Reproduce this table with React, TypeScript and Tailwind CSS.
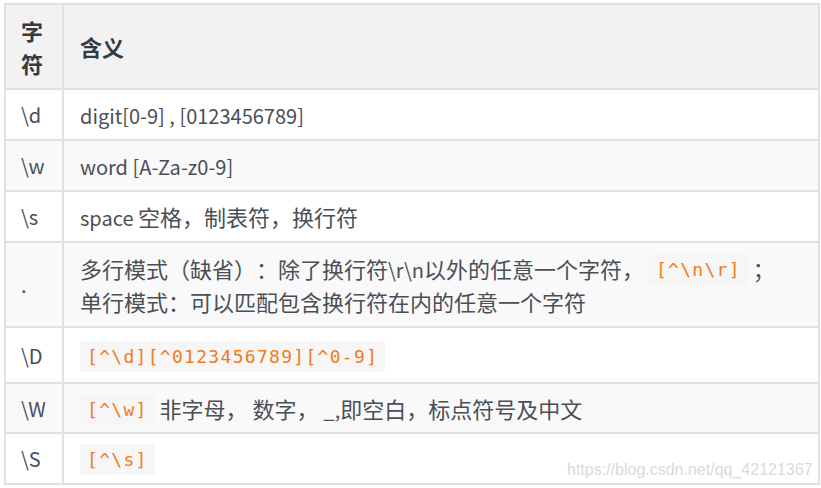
import React from 'react';

const Code = ({ children }: { children: React.ReactNode }) => (
  <code className="inline-block rounded-[3px] bg-[#f6f6f6] px-[7px] align-[2px] font-['DejaVu_Sans_Mono',monospace] text-[18px] leading-[31px] tracking-[1.3px] text-[#f47a17]">
    {children}
  </code>
);

// Latin runs sit a touch smaller than the CJK text around them
const L = ({ children }: { children: React.ReactNode }) => <span className="text-[20px] leading-none">{children}</span>;

const rows: { ch: string; body: React.ReactNode; shade?: boolean; pad?: string }[] = [
  { ch: '\\d', body: <L>digit[0-9] , [0123456789]</L> },
  { ch: '\\w', body: <L>word [A-Za-z0-9]</L>, shade: true },
  {
    ch: '\\s',
    body: (
      <>
        <L>space </L>空格，制表符，换行符
      </>
    ),
  },
  {
    ch: '.',
    shade: true,
    pad: 'py-[8.5px]',
    body: (
      <>
        多行模式（缺省）：除了换行符<L>\r\n</L>以外的任意一个字符，  <Code>[^\n\r]</Code> ；
        <br />
        单行模式：可以匹配包含换行符在内的任意一个字符
      </>
    ),
  },
  { ch: '\\D', body: <Code>[^\d][^0123456789][^0-9]</Code>, pad: 'py-[10.5px]' },
  {
    ch: '\\W',
    shade: true,
    pad: 'py-[7.5px]',
    body: (
      <>
        <Code>[^\w]</Code> 非字母， 数字， <L>_,</L>即空白，标点符号及中文
      </>
    ),
  },
  { ch: '\\S', body: <Code>[^\s]</Code> },
];

export default function App() {
  return (
    <div className="relative h-[488px] w-[821px] bg-white pl-[4px] pt-[3px] font-['Noto_Sans_CJK_SC',sans-serif] text-[22px] text-[#4a4f55] [text-spacing-trim:space-all]">
      <table className="w-[816px] border-collapse border-2 border-[#dfe2e5]">
        <thead>
          <tr className="bg-[#f2f2f2] text-[22px] font-bold leading-[33px] text-[#333a42]">
            <th className="w-[58px] border-2 border-[#dfe2e5] px-[15px] py-[8.5px] text-left">字符</th>
            <th className="border-2 border-[#dfe2e5] px-[16px] py-[8.5px] text-left">含义</th>
          </tr>
        </thead>
        <tbody>
          {rows.map((r) => (
            <tr key={r.ch} className={r.shade ? 'bg-[#f9f9f9]' : 'bg-white'}>
              <td className={`border-2 border-[#dfe2e5] px-[15px] text-[20px] leading-[33px] ${r.pad ?? 'py-[8px]'}`}>{r.ch}</td>
              <td className={`border-2 border-[#dfe2e5] px-[16px] leading-[33px] ${r.pad ?? 'py-[8px]'}`}>{r.body}</td>
            </tr>
          ))}
        </tbody>
      </table>
      <div className="absolute left-[567px] top-[458px] font-['Liberation_Sans',sans-serif] text-[16px] text-[#dadada]">
        https://blog.csdn.net/qq_42121367
      </div>
    </div>
  );
}
